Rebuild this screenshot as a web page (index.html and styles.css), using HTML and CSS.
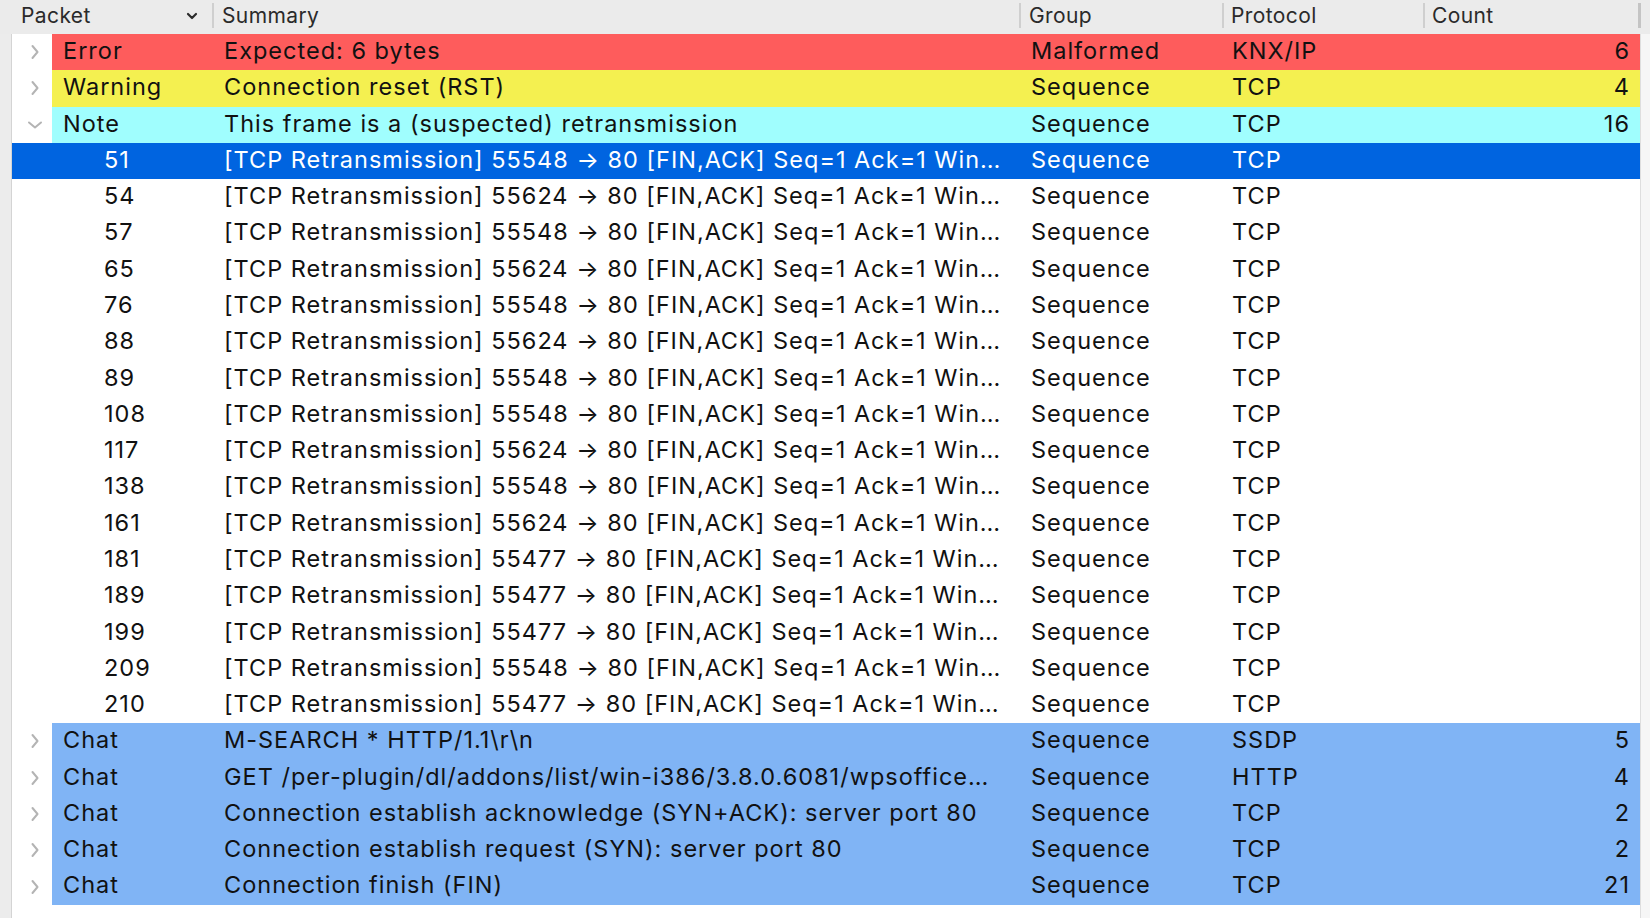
FILE: index.html
```html
<!DOCTYPE html>
<html>
<head>
<meta charset="utf-8">
<link rel="stylesheet" href="styles.css">
</head>
<body>
<div class="window">
  <div class="header">
    <div class="hcell hpacket"><span>Packet</span>
      <svg class="sort" width="12" height="8" viewBox="0 0 12 8"><polyline points="2,2 6,6 10,2" fill="none" stroke="#2b2b2b" stroke-width="2.2" stroke-linecap="round" stroke-linejoin="round"/></svg>
    </div>
    <div class="hcell hsep">Summary</div>
    <div class="hcell hsep">Group</div>
    <div class="hcell hsep hproto">Protocol</div>
    <div class="hcell hsep hcount">Count</div>
    <div class="hcell hsep hend"></div>
  </div>
  <div class="content">
    <div class="strip-left"></div>
    <div class="list">
      <div class="row group error">
        <div class="exp"><svg width="10" height="16" viewBox="0 0 10 16"><polyline points="2.5,2 7.5,8 2.5,14" fill="none" stroke="#b4b4b4" stroke-width="2" stroke-linecap="round" stroke-linejoin="round"/></svg></div>
        <div class="c packet">Error</div><div class="c summary">Expected: 6 bytes</div><div class="c grp">Malformed</div><div class="c proto">KNX/IP</div><div class="c count">6</div>
      </div>
      <div class="row group warning">
        <div class="exp"><svg width="10" height="16" viewBox="0 0 10 16"><polyline points="2.5,2 7.5,8 2.5,14" fill="none" stroke="#b4b4b4" stroke-width="2" stroke-linecap="round" stroke-linejoin="round"/></svg></div>
        <div class="c packet">Warning</div><div class="c summary">Connection reset (RST)</div><div class="c grp">Sequence</div><div class="c proto">TCP</div><div class="c count">4</div>
      </div>
      <div class="row group note">
        <div class="exp"><svg width="16" height="10" viewBox="0 0 16 10"><polyline points="2,2.5 8,7.5 14,2.5" fill="none" stroke="#b4b4b4" stroke-width="2" stroke-linecap="round" stroke-linejoin="round"/></svg></div>
        <div class="c packet">Note</div><div class="c summary">This frame is a (suspected) retransmission</div><div class="c grp">Sequence</div><div class="c proto">TCP</div><div class="c count">16</div>
      </div>
      <div class="row item selected"><div class="exp"></div><div class="c packet">51</div><div class="c summary">[TCP Retransmission] 55548 → 80 [FIN,ACK] Seq=1 Ack=1 Win…</div><div class="c grp">Sequence</div><div class="c proto">TCP</div><div class="c count"></div></div>
      <div class="row item"><div class="exp"></div><div class="c packet">54</div><div class="c summary">[TCP Retransmission] 55624 → 80 [FIN,ACK] Seq=1 Ack=1 Win…</div><div class="c grp">Sequence</div><div class="c proto">TCP</div><div class="c count"></div></div>
      <div class="row item"><div class="exp"></div><div class="c packet">57</div><div class="c summary">[TCP Retransmission] 55548 → 80 [FIN,ACK] Seq=1 Ack=1 Win…</div><div class="c grp">Sequence</div><div class="c proto">TCP</div><div class="c count"></div></div>
      <div class="row item"><div class="exp"></div><div class="c packet">65</div><div class="c summary">[TCP Retransmission] 55624 → 80 [FIN,ACK] Seq=1 Ack=1 Win…</div><div class="c grp">Sequence</div><div class="c proto">TCP</div><div class="c count"></div></div>
      <div class="row item"><div class="exp"></div><div class="c packet">76</div><div class="c summary">[TCP Retransmission] 55548 → 80 [FIN,ACK] Seq=1 Ack=1 Win…</div><div class="c grp">Sequence</div><div class="c proto">TCP</div><div class="c count"></div></div>
      <div class="row item"><div class="exp"></div><div class="c packet">88</div><div class="c summary">[TCP Retransmission] 55624 → 80 [FIN,ACK] Seq=1 Ack=1 Win…</div><div class="c grp">Sequence</div><div class="c proto">TCP</div><div class="c count"></div></div>
      <div class="row item"><div class="exp"></div><div class="c packet">89</div><div class="c summary">[TCP Retransmission] 55548 → 80 [FIN,ACK] Seq=1 Ack=1 Win…</div><div class="c grp">Sequence</div><div class="c proto">TCP</div><div class="c count"></div></div>
      <div class="row item"><div class="exp"></div><div class="c packet">108</div><div class="c summary">[TCP Retransmission] 55548 → 80 [FIN,ACK] Seq=1 Ack=1 Win…</div><div class="c grp">Sequence</div><div class="c proto">TCP</div><div class="c count"></div></div>
      <div class="row item"><div class="exp"></div><div class="c packet">117</div><div class="c summary">[TCP Retransmission] 55624 → 80 [FIN,ACK] Seq=1 Ack=1 Win…</div><div class="c grp">Sequence</div><div class="c proto">TCP</div><div class="c count"></div></div>
      <div class="row item"><div class="exp"></div><div class="c packet">138</div><div class="c summary">[TCP Retransmission] 55548 → 80 [FIN,ACK] Seq=1 Ack=1 Win…</div><div class="c grp">Sequence</div><div class="c proto">TCP</div><div class="c count"></div></div>
      <div class="row item"><div class="exp"></div><div class="c packet">161</div><div class="c summary">[TCP Retransmission] 55624 → 80 [FIN,ACK] Seq=1 Ack=1 Win…</div><div class="c grp">Sequence</div><div class="c proto">TCP</div><div class="c count"></div></div>
      <div class="row item"><div class="exp"></div><div class="c packet">181</div><div class="c summary">[TCP Retransmission] 55477 → 80 [FIN,ACK] Seq=1 Ack=1 Win…</div><div class="c grp">Sequence</div><div class="c proto">TCP</div><div class="c count"></div></div>
      <div class="row item"><div class="exp"></div><div class="c packet">189</div><div class="c summary">[TCP Retransmission] 55477 → 80 [FIN,ACK] Seq=1 Ack=1 Win…</div><div class="c grp">Sequence</div><div class="c proto">TCP</div><div class="c count"></div></div>
      <div class="row item"><div class="exp"></div><div class="c packet">199</div><div class="c summary">[TCP Retransmission] 55477 → 80 [FIN,ACK] Seq=1 Ack=1 Win…</div><div class="c grp">Sequence</div><div class="c proto">TCP</div><div class="c count"></div></div>
      <div class="row item"><div class="exp"></div><div class="c packet">209</div><div class="c summary">[TCP Retransmission] 55548 → 80 [FIN,ACK] Seq=1 Ack=1 Win…</div><div class="c grp">Sequence</div><div class="c proto">TCP</div><div class="c count"></div></div>
      <div class="row item"><div class="exp"></div><div class="c packet">210</div><div class="c summary">[TCP Retransmission] 55477 → 80 [FIN,ACK] Seq=1 Ack=1 Win…</div><div class="c grp">Sequence</div><div class="c proto">TCP</div><div class="c count"></div></div>
      <div class="row group chat">
        <div class="exp"><svg width="10" height="16" viewBox="0 0 10 16"><polyline points="2.5,2 7.5,8 2.5,14" fill="none" stroke="#b4b4b4" stroke-width="2" stroke-linecap="round" stroke-linejoin="round"/></svg></div>
        <div class="c packet">Chat</div><div class="c summary">M-SEARCH * HTTP/1.1\r\n</div><div class="c grp">Sequence</div><div class="c proto">SSDP</div><div class="c count">5</div>
      </div>
      <div class="row group chat">
        <div class="exp"><svg width="10" height="16" viewBox="0 0 10 16"><polyline points="2.5,2 7.5,8 2.5,14" fill="none" stroke="#b4b4b4" stroke-width="2" stroke-linecap="round" stroke-linejoin="round"/></svg></div>
        <div class="c packet">Chat</div><div class="c summary">GET /per-plugin/dl/addons/list/win-i386/3.8.0.6081/wpsoffice…</div><div class="c grp">Sequence</div><div class="c proto">HTTP</div><div class="c count">4</div>
      </div>
      <div class="row group chat">
        <div class="exp"><svg width="10" height="16" viewBox="0 0 10 16"><polyline points="2.5,2 7.5,8 2.5,14" fill="none" stroke="#b4b4b4" stroke-width="2" stroke-linecap="round" stroke-linejoin="round"/></svg></div>
        <div class="c packet">Chat</div><div class="c summary">Connection establish acknowledge (SYN+ACK): server port 80</div><div class="c grp">Sequence</div><div class="c proto">TCP</div><div class="c count">2</div>
      </div>
      <div class="row group chat">
        <div class="exp"><svg width="10" height="16" viewBox="0 0 10 16"><polyline points="2.5,2 7.5,8 2.5,14" fill="none" stroke="#b4b4b4" stroke-width="2" stroke-linecap="round" stroke-linejoin="round"/></svg></div>
        <div class="c packet">Chat</div><div class="c summary">Connection establish request (SYN): server port 80</div><div class="c grp">Sequence</div><div class="c proto">TCP</div><div class="c count">2</div>
      </div>
      <div class="row group chat">
        <div class="exp"><svg width="10" height="16" viewBox="0 0 10 16"><polyline points="2.5,2 7.5,8 2.5,14" fill="none" stroke="#b4b4b4" stroke-width="2" stroke-linecap="round" stroke-linejoin="round"/></svg></div>
        <div class="c packet">Chat</div><div class="c summary">Connection finish (FIN)</div><div class="c grp">Sequence</div><div class="c proto">TCP</div><div class="c count">21</div>
      </div>
    </div>
    <div class="strip-right"></div>
  </div>
</div>
</body>
</html>
```
FILE: styles.css
```css
* { box-sizing: border-box; }
html, body { margin: 0; padding: 0; }
body {
  width: 1650px;
  height: 918px;
  overflow: hidden;
  background: #ffffff;
  font-family: "Inter", "Noto Sans", sans-serif;
  color: #111111;
}
.window {
  display: flex;
  flex-direction: column;
  width: 1650px;
  height: 918px;
}
.header {
  display: grid;
  grid-template-columns: 212px 807px 203px 201px 215px 12px;
  height: 34px;
  background: #ebebeb;
  font-size: 21px;
  letter-spacing: 0.4px;
  color: #2a2a2a;
  flex: none;
}
.hcell {
  display: flex;
  align-items: center;
  padding-left: 10px;
  padding-bottom: 4px;
  height: 34px;
  position: relative;
  white-space: nowrap;
}
.hpacket {
  padding-left: 21px;
  justify-content: space-between;
  padding-right: 14px;
}
.sort { margin-top: 2px; }
.hsep { padding-left: 10px; }
.hsep::before {
  content: "";
  position: absolute;
  left: 0;
  top: 3px;
  width: 2px;
  height: 25px;
  background: #cfcfcf;
}
.hproto { padding-left: 9px; }
.hcount { padding-left: 9px; }
.hend::before { background: #c4c4c4; width: 3px; }
.content {
  flex: 1;
  display: flex;
}
.strip-left {
  width: 12px;
  background: #ececec;
  border-right: 1px solid #d4d4d4;
  flex: none;
}
.strip-right {
  width: 10px;
  background: #f6f6f6;
  border-left: 1px solid #dedede;
  flex: none;
}
.list {
  width: 1628px;
  flex: none;
  background: #ffffff;
}
.row {
  display: grid;
  grid-template-columns: 40px 160px 807px 203px 201px 217px;
  height: 36.29px;
  font-size: 23.5px;
  letter-spacing: 1px;
  line-height: 34px;
  white-space: nowrap;
}
.c {
  overflow: hidden;
  height: 36.29px;
}
.exp {
  display: flex;
  align-items: center;
  justify-content: center;
  padding-left: 6px;
  background: #ffffff;
}
.packet { padding-left: 11px; }
.item .packet { padding-left: 52px; }
.summary { padding-left: 12px; }
.grp { padding-left: 12px; }
.proto { padding-left: 10px; }
.count { text-align: right; padding-right: 10px; }
.error .c { background: #fe5c5c; }
.warning .c { background: #f4f050; }
.note .c { background: #a0fefe; }
.chat .c { background: #80b4f5; }
.selected { background: #0064e0; color: #ffffff; }
.selected .exp { background: #0064e0; }
```
